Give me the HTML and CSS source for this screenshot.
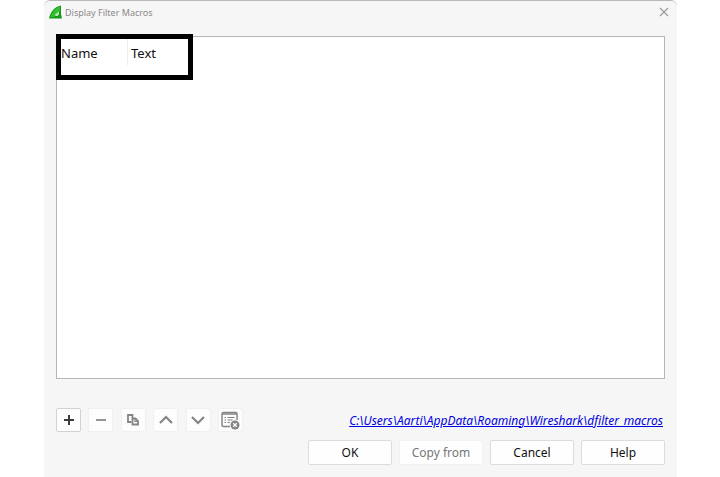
FILE: index.html
```
<!DOCTYPE html>
<html lang="en">

<head>
    <meta charset="UTF-8">
    <meta name="viewport" content="width=device-width, initial-scale=1.0">
    <title>Display Filter Macros</title>
    <link rel="stylesheet" href="styles.css">
</head>

<body>
    <div class="dialog">
        <header class="titlebar">
            <svg class="logo" width="13" height="14" viewBox="0 0 13 14">
                <path d="M0 13.500C1.500 7 5 2 12 0.500V9L13 13.500Z" fill="#149a18" />
                <path d="M1.500 12C3 7 6 3 11 1.500V6L5 12Z" fill="#35c02f" />
                <path d="M6 9.500L8 8L10 6.500V9.500L8.500 11H6.500Z" fill="#b9e8b5" />
            </svg>
            <h1>Display Filter Macros</h1>
            <button class="close" type="button" aria-label="Close">
                <svg width="10" height="10" viewBox="0 0 10 10">
                    <path d="M1 1L9 9M9 1L1 9" stroke="#999" stroke-width="1.100" />
                </svg>
            </button>
        </header>
        <main class="list">
            <table>
                <thead>
                    <tr>
                        <th class="name">Name</th>
                        <th>Text</th>
                    </tr>
                </thead>
            </table>
        </main>
        <div class="toolbar">
            <div class="tools">
                <button class="tool active" type="button" aria-label="Add">
                    <svg width="20" height="20" viewBox="0 0 20 20">
                        <path d="M10 5V15M5 10H15" stroke="#3a3a3a" stroke-width="2" />
                    </svg>
                </button>
                <button class="tool" type="button" aria-label="Remove">
                    <svg width="20" height="20" viewBox="0 0 20 20">
                        <path d="M5 10H15" stroke="#949494" stroke-width="2" />
                    </svg>
                </button>
                <button class="tool" type="button" aria-label="Copy">
                    <svg width="20" height="20" viewBox="0 0 20 20" fill="none" stroke="#858585" stroke-width="1.800">
                        <path d="M8.500 12H5V5H9.500V8" />
                        <path d="M9.500 8.500H12.500L15 11V14.500H9.500Z" />
                        <path d="M12 8.500V11.500H15" stroke-width="1.200" />
                    </svg>
                </button>
                <button class="tool" type="button" aria-label="Move up">
                    <svg width="20" height="20" viewBox="0 0 20 20">
                        <path d="M4 13L10 7L16 13" fill="none" stroke="#858585" stroke-width="2.200" />
                    </svg>
                </button>
                <button class="tool" type="button" aria-label="Move down">
                    <svg width="20" height="20" viewBox="0 0 20 20">
                        <path d="M4 7L10 13L16 7" fill="none" stroke="#858585" stroke-width="2.200" />
                    </svg>
                </button>
                <button class="tool" type="button" aria-label="Clear">
                    <svg width="20" height="20" viewBox="0 0 20 20" fill="none" stroke="#858585">
                        <path d="M10 16.500H3.500Q2 16.500 2 15V4Q2 2.500 3.500 2.500H15.500Q17 2.500 17 4V10" stroke-width="1.500" />
                        <path d="M2 4H17" stroke-width="1.500" />
                        <path d="M4.500 7.500H6M7.500 7.500H14.500M4.500 10H6M7.500 10H12.500M4.500 12.500H6M7.500 12.500H10" stroke-width="1.200" />
                        <circle cx="15" cy="15" r="4.500" fill="#858585" stroke="none" />
                        <path d="M13.200 13.200L16.800 16.800M16.800 13.200L13.200 16.800" stroke="#fff" stroke-width="1.300" />
                    </svg>
                </button>
            </div>
            <a class="path" href="#">C:\Users\Aarti\AppData\Roaming\Wireshark\dfilter_macros</a>
        </div>
        <footer class="actions">
            <button type="button">OK</button>
            <button type="button" disabled>Copy from</button>
            <button type="button">Cancel</button>
            <button type="button">Help</button>
        </footer>
    </div>
</body>

</html>
```
FILE: styles.css
```
* {
    box-sizing: border-box;
    margin: 0;
    padding: 0;
}

body {
    background-color: #fff;
    color: #111;
    font: 12px "Noto Sans", "Open Sans", sans-serif;
}

button {
    font: inherit;
    color: inherit;
}

.dialog {
    display: flex;
    flex-direction: column;
    min-height: 100vh;
    margin: 0 43px 0 44px;
    padding: 0 12px 12px;
    background-color: #f6f6f6;
    border-top: 1px solid #b8b8b8;
    border-radius: 6px 6px 0 0;
}

.titlebar {
    display: flex;
    align-items: center;
    gap: 3px;
    height: 22px;
    margin: 0 -8px 13px -7px;
}

.titlebar h1 {
    flex: 1;
    color: #8a8a8a;
    font-size: 9px;
    font-weight: normal;
}

.close {
    display: flex;
    padding: 4px;
    background: none;
    border: none;
}

.list {
    flex: 1;
    background-color: #fff;
    border: 1px solid #b5b5b5;
}

.list table {
    width: 137px;
    height: 46px;
    margin: -3px 0 0 -1px;
    border: 5px solid #000;
    border-spacing: 0;
    table-layout: fixed;
}

.list th {
    padding-bottom: 8px;
    font-size: 13px;
    font-weight: normal;
    text-align: left;
    line-height: 22px;
}

.list th + th {
    padding-left: 4px;
    background: linear-gradient(#ececec, #ececec) left top / 1px 26px no-repeat;
}

.list .name {
    width: 66px;
}

.toolbar {
    display: flex;
    align-items: center;
    justify-content: space-between;
    margin-top: 29px;
}

.tools {
    display: flex;
    justify-content: space-between;
    width: 187px;
}

.tool {
    display: flex;
    align-items: center;
    justify-content: center;
    width: 25px;
    height: 24px;
    background-color: #fdfdfd;
    border: 1px solid #f0f0f0;
    border-radius: 2px;
}

.tool.active {
    border-color: #d2d2d2;
}

.path {
    padding-right: 2px;
    color: #0000e0;
    font-style: italic;
    white-space: nowrap;
}

.actions {
    display: flex;
    justify-content: flex-end;
    gap: 7px;
    margin-top: 8px;
}

.actions button {
    width: 84px;
    height: 25px;
    background-color: #fefefe;
    border: 1px solid #dcdcdc;
    border-radius: 2px;
}

.actions button:disabled {
    color: #777;
    border-color: #f2f2f2;
}
```
